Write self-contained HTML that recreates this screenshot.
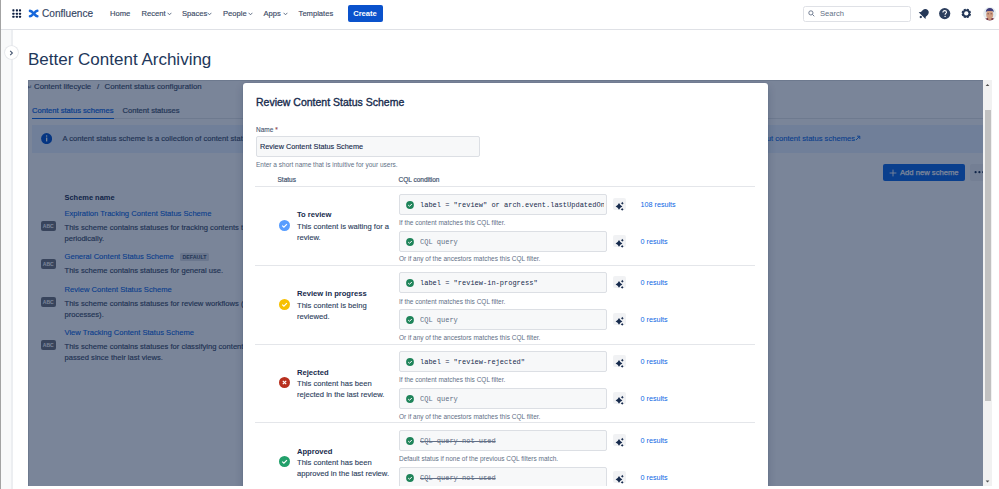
<!DOCTYPE html>
<html><head><meta charset="utf-8">
<style>
*{box-sizing:border-box;margin:0;padding:0}
html,body{width:999px;height:489px;overflow:hidden;background:#fff}
body{position:relative;font-family:"Liberation Sans",sans-serif;color:#172b4d}
.a{position:absolute;white-space:nowrap}
.nav{font-size:7.6px;color:#3b4a66;line-height:10px;top:9.3px;-webkit-text-stroke:.15px #3b4a66}
.chev{position:absolute;width:5px;height:5px}
.bc{font-size:7.8px;line-height:10px;color:#3b4a66;-webkit-text-stroke:.15px #3b4a66}
.tab{font-size:7.6px;line-height:10px;-webkit-text-stroke:.22px currentColor}
.txt{font-size:7.6px;line-height:10px;color:#3b4a66;-webkit-text-stroke:.15px #3b4a66}
.lnk{font-size:7.6px;line-height:10px;color:#0c66e4;-webkit-text-stroke:.12px #0c66e4}
.abc{width:14.5px;height:10px;background:#6f727a;border-radius:2px;color:#fff;font-size:5px;font-weight:700;line-height:10px;text-align:center}
.loz{width:29px;height:8px;background:#dcdfe4;border-radius:1.5px;color:#44546f;font-size:5.3px;font-weight:700;line-height:8px;text-align:center}
.sm{font-size:6.5px;line-height:10px}
.hl{color:#626f86}
.inp{width:208px;height:21px;background:#f7f8f9;border:1px solid #dcdfe4;border-radius:2px}
.mono{font-family:"Liberation Mono",monospace;font-size:7px;line-height:10px;overflow:hidden}
.aib{width:13px;height:12.3px;margin-top:-.5px;background:#f1f2f4;border-radius:2px}
</style></head><body>
<div class="a" style="left:0;top:0;width:1px;height:489px;background:#a3a3a3"></div>
<!-- header -->
<div class="a" style="left:1px;top:29px;width:998px;height:1px;background:#dfe1e6"></div>
<svg class="a" style="left:10px;top:6px" width="16" height="16" viewBox="0 0 16 16"><g fill="#0b1c3f"><rect x="2.35" y="3.35" width="2.1" height="2.1" rx=".6"/><rect x="5.85" y="3.35" width="2.1" height="2.1" rx=".6"/><rect x="8.95" y="3.35" width="2.1" height="2.1" rx=".6"/><rect x="2.35" y="6.65" width="2.1" height="2.1" rx=".6"/><rect x="5.85" y="6.65" width="2.1" height="2.1" rx=".6"/><rect x="8.95" y="6.65" width="2.1" height="2.1" rx=".6"/><rect x="2.35" y="9.75" width="2.1" height="2.1" rx=".6"/><rect x="5.85" y="9.75" width="2.1" height="2.1" rx=".6"/><rect x="8.95" y="9.75" width="2.1" height="2.1" rx=".6"/></g></svg>
<svg class="a" style="left:26px;top:6px" width="16" height="16" viewBox="0 0 16 16"><g fill="none" stroke="#1868db" stroke-width="2.6" stroke-linecap="round"><path d="M4 4.9 C6.6 4.9 8.8 10.1 11.3 10.2"/><path d="M4 10.3 C6.6 10.3 8.8 5 11.3 4.8"/></g></svg>
<div class="a" style="left:42px;top:6.3px;font-size:10.1px;line-height:15px;color:#344563;-webkit-text-stroke:.15px #344563">Confluence</div>
<div class="a nav" style="left:110px">Home</div>
<div class="a nav" style="left:141.5px">Recent</div>
<div class="a nav" style="left:182px">Spaces</div>
<div class="a nav" style="left:223px">People</div>
<div class="a nav" style="left:263.5px">Apps</div>
<div class="a nav" style="left:298.6px">Templates</div>
<svg class="a" style="left:166.5px;top:11.8px" width="5" height="4" viewBox="0 0 5 4"><path d="M0.6 0.8 L2.5 2.8 L4.4 0.8" fill="none" stroke="#44546f" stroke-width=".8"/></svg>
<svg class="a" style="left:207px;top:11.8px" width="5" height="4" viewBox="0 0 5 4"><path d="M0.6 0.8 L2.5 2.8 L4.4 0.8" fill="none" stroke="#44546f" stroke-width=".8"/></svg>
<svg class="a" style="left:248px;top:11.8px" width="5" height="4" viewBox="0 0 5 4"><path d="M0.6 0.8 L2.5 2.8 L4.4 0.8" fill="none" stroke="#44546f" stroke-width=".8"/></svg>
<svg class="a" style="left:283px;top:11.8px" width="5" height="4" viewBox="0 0 5 4"><path d="M0.6 0.8 L2.5 2.8 L4.4 0.8" fill="none" stroke="#44546f" stroke-width=".8"/></svg>
<div class="a" style="left:347.5px;top:5px;width:35px;height:17px;background:#0a52cc;border-radius:2px;color:#fff;font-weight:700;font-size:7.6px;line-height:17px;text-align:center">Create</div>
<!-- search -->
<div class="a" style="left:803px;top:5.5px;width:108px;height:16px;border:1px solid #dfe1e6;border-radius:2.5px;background:#fff"></div>
<svg class="a" style="left:808px;top:10px" width="7" height="7" viewBox="0 0 7 7"><circle cx="2.9" cy="2.9" r="2.1" fill="none" stroke="#626f86" stroke-width=".9"/><path d="M4.4 4.4 L6.3 6.3" stroke="#626f86" stroke-width=".9"/></svg>
<div class="a" style="left:820px;top:8.5px;font-size:7.6px;line-height:10px;color:#626f86">Search</div>
<!-- bell -->
<svg class="a" style="left:914px;top:4px" width="20" height="20" viewBox="0 0 20 20"><g transform="rotate(45 10.2 9.6)" fill="#253858"><path d="M10.2 4.6 C7.9 4.6 6.8 6.3 6.8 8.4 L6.8 10.8 L5.4 12.6 L15 12.6 L13.6 10.8 L13.6 8.4 C13.6 6.3 12.5 4.6 10.2 4.6Z"/><circle cx="10.2" cy="14.4" r="1.2"/></g></svg>
<!-- help -->
<svg class="a" style="left:939.2px;top:8.1px" width="12" height="12" viewBox="0 0 12 12"><circle cx="5.7" cy="5.6" r="5.6" fill="#2c3e5d"/><path d="M3.9 4.4 C3.9 3.2 4.7 2.6 5.7 2.6 C6.8 2.6 7.5 3.3 7.5 4.2 C7.5 5.4 6.1 5.5 6.1 6.7" fill="none" stroke="#fff" stroke-width="1.1"/><circle cx="6.1" cy="8.4" r=".7" fill="#fff"/></svg>
<!-- gear -->
<svg class="a" style="left:956px;top:4px" width="20" height="20" viewBox="0 0 20 20"><g fill="#253858"><circle cx="10.3" cy="9.4" r="3.9"/><rect x="9.20" y="4.70" width="2.2" height="2.2" rx=".3" transform="rotate(22.5 10.3 9.4)"/><rect x="9.20" y="4.70" width="2.2" height="2.2" rx=".3" transform="rotate(67.5 10.3 9.4)"/><rect x="9.20" y="4.70" width="2.2" height="2.2" rx=".3" transform="rotate(112.5 10.3 9.4)"/><rect x="9.20" y="4.70" width="2.2" height="2.2" rx=".3" transform="rotate(157.5 10.3 9.4)"/><rect x="9.20" y="4.70" width="2.2" height="2.2" rx=".3" transform="rotate(202.5 10.3 9.4)"/><rect x="9.20" y="4.70" width="2.2" height="2.2" rx=".3" transform="rotate(247.5 10.3 9.4)"/><rect x="9.20" y="4.70" width="2.2" height="2.2" rx=".3" transform="rotate(292.5 10.3 9.4)"/><rect x="9.20" y="4.70" width="2.2" height="2.2" rx=".3" transform="rotate(337.5 10.3 9.4)"/></g><circle cx="10.3" cy="9.4" r="2.15" fill="#fff"/></svg>
<!-- avatar -->
<svg class="a" style="left:982.5px;top:7px" width="14" height="14" viewBox="0 0 14 14"><defs><clipPath id="avc"><circle cx="6.8" cy="6.8" r="6.7"/></clipPath></defs><g clip-path="url(#avc)"><rect width="14" height="14" fill="#e6edf1"/><ellipse cx="6.8" cy="14.2" rx="6.2" ry="3.4" fill="#6e2b3c"/><rect x="5.2" y="9.5" width="3.2" height="3.5" fill="#c38c73"/><ellipse cx="6.7" cy="7.6" rx="3.5" ry="4.3" fill="#d09d83"/><path d="M2.8 5.6 C2.6 2.6 4.4 1 6.9 1 C9.4 1 11 2.6 10.7 5.6 C10 4.4 9.2 4 6.8 4.1 C4.4 4 3.5 4.4 2.8 5.6Z" fill="#3f3d7a"/><rect x="4.4" y="6.5" width="1.6" height=".7" fill="#5b3a3a"/><rect x="7.5" y="6.5" width="1.6" height=".7" fill="#5b3a3a"/></g></svg>
<!-- sidebar -->
<div class="a" style="left:1px;top:30px;width:10.5px;height:459px;background:#f8f9fa"></div>
<div class="a" style="left:11px;top:30px;width:1.5px;height:459px;background:#eceef1"></div>
<div class="a" style="left:4.8px;top:46px;width:13.4px;height:13.4px;border-radius:50%;background:#fff;box-shadow:0 0 0 .8px #e4e6ea"></div>
<svg class="a" style="left:9px;top:50px" width="5" height="6" viewBox="0 0 5 6"><path d="M1.2 0.8 L3.4 3 L1.2 5.2" fill="none" stroke="#44546f" stroke-width="1.1"/></svg>
<!-- title -->
<div class="a" style="left:28px;top:49px;font-size:17px;line-height:22px;color:#22375a">Better Content Archiving</div>

<!-- container -->
<div class="a" id="ct" style="left:28px;top:80px;width:964px;height:406px;overflow:hidden;background:#fff">
<div class="a" style="left:-28px;top:-80px;width:999px;height:489px">
<div class="a" style="left:28px;top:80px;width:956px;height:1px;background:#e2e4e8"></div>
<div class="a" style="left:28px;top:80px;width:1px;height:410px;background:#e2e4e8"></div>
<!-- breadcrumb -->
<div class="a bc" style="left:27px;top:81.5px;font-size:6px;opacity:.7">&#8629;</div>
<div class="a bc" style="left:34px;top:81.5px">Content lifecycle</div>
<div class="a bc" style="left:97px;top:81.5px">/</div>
<div class="a bc" style="left:104.5px;top:81.5px">Content status configuration</div>
<!-- tabs -->
<div class="a tab" style="left:32px;top:105.5px;color:#0c66e4">Content status schemes</div>
<div class="a tab" style="left:122.5px;top:105.5px;color:#44546f">Content statuses</div>
<div class="a" style="left:32px;top:118px;width:951px;height:1px;background:#e4e6ea"></div>
<div class="a" style="left:32px;top:117.5px;width:81.5px;height:1.6px;background:#0c66e4"></div>
<!-- banner -->
<div class="a" style="left:32px;top:124.5px;width:960px;height:28px;background:#e9f2ff"></div>
<svg class="a" style="left:41.2px;top:132.8px" width="11" height="11" viewBox="0 0 11 11"><circle cx="5.6" cy="5.6" r="5.5" fill="#0052cc"/><rect x="5" y="4.6" width="1.3" height="3.8" fill="#fff"/><circle cx="5.65" cy="3.1" r=".75" fill="#fff"/></svg>
<div class="a txt" style="left:62.5px;top:133.5px">A content status scheme is a collection of content statuses with the conditions under which each status is automatically applied.</div>
<div class="a txt" style="right:144px;top:133.5px;color:#0c66e4;-webkit-text-stroke:.12px #0c66e4">Learn more about content status schemes</div>
<svg class="a" style="left:855px;top:135px" width="6" height="6" viewBox="0 0 6 6"><path d="M1 5 L4.6 1.4 M2 1.2 H4.8 V4" fill="none" stroke="#0c66e4" stroke-width=".9"/></svg>
<!-- add button -->
<div class="a" style="left:883px;top:164px;width:82px;height:16.6px;background:#0c66e4;border-radius:2px"></div>
<svg class="a" style="left:889px;top:168.7px" width="8" height="8" viewBox="0 0 8 8"><path d="M4 0.6 V7.4 M0.6 4 H7.4" stroke="#fff" stroke-width=".9"/></svg>
<div class="a" style="left:900px;top:167.5px;font-size:7.65px;line-height:10px;color:#fff;-webkit-text-stroke:.25px #fff">Add new scheme</div>
<div class="a" style="left:970px;top:164px;width:20px;height:16.6px;background:#f1f2f4;border-radius:2px"></div>
<svg class="a" style="left:973px;top:170px" width="12" height="5" viewBox="0 0 12 5"><circle cx="2.6" cy="2.2" r="1.1" fill="#172b4d"/><circle cx="6.4" cy="2.2" r="1.1" fill="#172b4d"/><circle cx="10.2" cy="2.2" r="1.1" fill="#172b4d"/></svg>
<!-- table -->
<div class="a" style="left:64.5px;top:193.2px;font-size:7.45px;line-height:10px;font-weight:700;color:#172b4d">Scheme name</div>
<div class="a lnk" style="left:64.5px;top:209.0px">Expiration Tracking Content Status Scheme</div>
<div class="a txt" style="left:64.5px;top:222.8px">This scheme contains statuses for tracking contents that have not been updated periodically.</div>
<div class="a txt" style="left:64.5px;top:234.1px">periodically.</div>
<div class="a abc" style="left:41px;top:220.9px">ABC</div>
<div class="a lnk" style="left:64.5px;top:252.3px">General Content Status Scheme</div>
<div class="a txt" style="left:64.5px;top:266.1px">This scheme contains statuses for general use.</div>
<div class="a abc" style="left:41px;top:259.2px">ABC</div>
<div class="a loz" style="left:180px;top:253.4px">DEFAULT</div>
<div class="a lnk" style="left:64.5px;top:284.9px">Review Content Status Scheme</div>
<div class="a txt" style="left:64.5px;top:298.7px">This scheme contains statuses for review workflows (approval processes).</div>
<div class="a txt" style="left:64.5px;top:310.0px">processes).</div>
<div class="a abc" style="left:41px;top:296.7px">ABC</div>
<div class="a lnk" style="left:64.5px;top:328.3px">View Tracking Content Status Scheme</div>
<div class="a txt" style="left:64.5px;top:342.1px">This scheme contains statuses for classifying content by the time passed since their last views.</div>
<div class="a txt" style="left:64.5px;top:353.4px">passed since their last views.</div>
<div class="a abc" style="left:41px;top:340.0px">ABC</div>
<!-- blanket -->
<div class="a" style="left:28px;top:80px;width:955px;height:410px;background:rgba(9,30,66,0.54)"></div>
<!-- MODAL START -->
<div class="a" style="left:243px;top:83px;width:525px;height:420px;background:#fff;border-radius:3px;box-shadow:0 0 1px rgba(9,30,66,.31),0 4px 8px rgba(9,30,66,.2)"></div>
<div class="a" style="left:256px;top:95.2px;font-size:10.5px;line-height:14px;color:#172b4d;-webkit-text-stroke:.35px #172b4d">Review Content Status Scheme</div>
<div class="a sm" style="left:256px;top:124.5px;color:#44546f;-webkit-text-stroke:.1px #44546f">Name<span style="color:#c9372c"> *</span></div>
<div class="a" style="left:256px;top:135.5px;width:224px;height:21.2px;background:#f7f8f9;border:1px solid #dcdfe4;border-radius:2px"></div>
<div class="a" style="left:260px;top:141.8px;font-size:7.3px;line-height:10px;color:#172b4d;-webkit-text-stroke:.12px #172b4d">Review Content Status Scheme</div>
<div class="a sm hl" style="left:256px;top:159.5px">Enter a short name that is intuitive for your users.</div>
<div class="a sm" style="left:277.5px;top:174.5px;color:#44546f;-webkit-text-stroke:.2px #44546f">Status</div>
<div class="a sm" style="left:398.5px;top:174.5px;color:#44546f;-webkit-text-stroke:.2px #44546f">CQL condition</div>
<div class="a" style="left:255px;top:186.0px;width:500px;height:1px;background:#e4e6ea"></div>
<div class="a" style="left:255px;top:265.0px;width:500px;height:1px;background:#e4e6ea"></div>
<div class="a" style="left:255px;top:343.5px;width:500px;height:1px;background:#e4e6ea"></div>
<div class="a" style="left:255px;top:422.3px;width:500px;height:1px;background:#e4e6ea"></div>
<svg class="a" style="left:278.5px;top:219.9px" width="11" height="11" viewBox="0 0 11 11"><circle cx="5.5" cy="5.5" r="5.5" fill="#579dff"/><path d="M3.2 5.6 L4.9 7.2 L7.9 4.2" fill="none" stroke="#fff" stroke-width="1.2"/></svg>
<div class="a" style="left:297px;top:210.4px;font-size:7.6px;line-height:10px;font-weight:700;color:#172b4d">To review</div>
<div class="a" style="left:297px;top:221.8px;font-size:7.6px;line-height:10px;color:#2c3e5d;-webkit-text-stroke:.12px #2c3e5d">This content is waiting for a</div>
<div class="a" style="left:297px;top:232.8px;font-size:7.6px;line-height:10px;color:#2c3e5d;-webkit-text-stroke:.12px #2c3e5d">review.</div>
<div class="a inp" style="left:399px;top:194.0px"></div>
<svg class="a" style="left:406px;top:201.0px" width="8" height="8" viewBox="0 0 8 8"><circle cx="4" cy="4" r="3.9" fill="#1f845a"/><path d="M2.2 4.1 L3.5 5.3 L5.8 3" fill="none" stroke="#fff" stroke-width="1"/></svg>
<div class="a mono" style="left:420px;top:199.5px;color:#172b4d;width:184px;overflow:hidden">label = &quot;review&quot; or arch.event.lastUpdatedOn</div>
<div class="a aib" style="left:613px;top:198.5px"><svg width="13" height="12.5" viewBox="0 0 13 12.5"><path d="M6.0 3.0000000000000004 Q7.02 5.38 9.4 6.4 Q7.02 7.42 6.0 9.8 Q4.98 7.42 2.6 6.4 Q4.98 5.38 6.0 3.0000000000000004Z" fill="#172b4d"/><path d="M9.3 1.7999999999999998 Q9.75 2.85 10.8 3.3 Q9.75 3.75 9.3 4.8 Q8.85 3.75 7.800000000000001 3.3 Q8.85 2.85 9.3 1.7999999999999998Z" fill="#172b4d"/><path d="M9.2 8.0 Q9.62 8.98 10.6 9.4 Q9.62 9.82 9.2 10.8 Q8.78 9.82 7.799999999999999 9.4 Q8.78 8.98 9.2 8.0Z" fill="#172b4d"/></svg></div>
<div class="a" style="left:640.5px;top:200.3px;font-size:7.2px;line-height:10px;color:#0c66e4">108 results</div>
<div class="a sm hl" style="left:399px;top:217.7px">If the content matches this CQL filter.</div>
<div class="a inp" style="left:399px;top:231.0px"></div>
<svg class="a" style="left:406px;top:238.0px" width="8" height="8" viewBox="0 0 8 8"><circle cx="4" cy="4" r="3.9" fill="#1f845a"/><path d="M2.2 4.1 L3.5 5.3 L5.8 3" fill="none" stroke="#fff" stroke-width="1"/></svg>
<div class="a mono" style="left:420px;top:236.5px;color:#626f86">CQL query</div>
<div class="a aib" style="left:613px;top:235.5px"><svg width="13" height="12.5" viewBox="0 0 13 12.5"><path d="M6.0 3.0000000000000004 Q7.02 5.38 9.4 6.4 Q7.02 7.42 6.0 9.8 Q4.98 7.42 2.6 6.4 Q4.98 5.38 6.0 3.0000000000000004Z" fill="#172b4d"/><path d="M9.3 1.7999999999999998 Q9.75 2.85 10.8 3.3 Q9.75 3.75 9.3 4.8 Q8.85 3.75 7.800000000000001 3.3 Q8.85 2.85 9.3 1.7999999999999998Z" fill="#172b4d"/><path d="M9.2 8.0 Q9.62 8.98 10.6 9.4 Q9.62 9.82 9.2 10.8 Q8.78 9.82 7.799999999999999 9.4 Q8.78 8.98 9.2 8.0Z" fill="#172b4d"/></svg></div>
<div class="a" style="left:640.5px;top:237.3px;font-size:7.2px;line-height:10px;color:#0c66e4">0 results</div>
<div class="a sm hl" style="left:399px;top:254.4px">Or if any of the ancestors matches this CQL filter.</div>
<svg class="a" style="left:278.5px;top:298.8px" width="11" height="11" viewBox="0 0 11 11"><circle cx="5.5" cy="5.5" r="5.5" fill="#f7c000"/><path d="M3.2 5.6 L4.9 7.2 L7.9 4.2" fill="none" stroke="#fff" stroke-width="1.2"/></svg>
<div class="a" style="left:297px;top:289.3px;font-size:7.6px;line-height:10px;font-weight:700;color:#172b4d">Review in progress</div>
<div class="a" style="left:297px;top:300.7px;font-size:7.6px;line-height:10px;color:#2c3e5d;-webkit-text-stroke:.12px #2c3e5d">This content is being</div>
<div class="a" style="left:297px;top:311.7px;font-size:7.6px;line-height:10px;color:#2c3e5d;-webkit-text-stroke:.12px #2c3e5d">reviewed.</div>
<div class="a inp" style="left:399px;top:272.0px"></div>
<svg class="a" style="left:406px;top:279.0px" width="8" height="8" viewBox="0 0 8 8"><circle cx="4" cy="4" r="3.9" fill="#1f845a"/><path d="M2.2 4.1 L3.5 5.3 L5.8 3" fill="none" stroke="#fff" stroke-width="1"/></svg>
<div class="a mono" style="left:420px;top:277.5px;color:#172b4d;width:184px;overflow:hidden">label = &quot;review-in-progress&quot;</div>
<div class="a aib" style="left:613px;top:276.5px"><svg width="13" height="12.5" viewBox="0 0 13 12.5"><path d="M6.0 3.0000000000000004 Q7.02 5.38 9.4 6.4 Q7.02 7.42 6.0 9.8 Q4.98 7.42 2.6 6.4 Q4.98 5.38 6.0 3.0000000000000004Z" fill="#172b4d"/><path d="M9.3 1.7999999999999998 Q9.75 2.85 10.8 3.3 Q9.75 3.75 9.3 4.8 Q8.85 3.75 7.800000000000001 3.3 Q8.85 2.85 9.3 1.7999999999999998Z" fill="#172b4d"/><path d="M9.2 8.0 Q9.62 8.98 10.6 9.4 Q9.62 9.82 9.2 10.8 Q8.78 9.82 7.799999999999999 9.4 Q8.78 8.98 9.2 8.0Z" fill="#172b4d"/></svg></div>
<div class="a" style="left:640.5px;top:278.3px;font-size:7.2px;line-height:10px;color:#0c66e4">0 results</div>
<div class="a sm hl" style="left:399px;top:296.6px">If the content matches this CQL filter.</div>
<div class="a inp" style="left:399px;top:309.0px"></div>
<svg class="a" style="left:406px;top:316.0px" width="8" height="8" viewBox="0 0 8 8"><circle cx="4" cy="4" r="3.9" fill="#1f845a"/><path d="M2.2 4.1 L3.5 5.3 L5.8 3" fill="none" stroke="#fff" stroke-width="1"/></svg>
<div class="a mono" style="left:420px;top:314.5px;color:#626f86">CQL query</div>
<div class="a aib" style="left:613px;top:313.5px"><svg width="13" height="12.5" viewBox="0 0 13 12.5"><path d="M6.0 3.0000000000000004 Q7.02 5.38 9.4 6.4 Q7.02 7.42 6.0 9.8 Q4.98 7.42 2.6 6.4 Q4.98 5.38 6.0 3.0000000000000004Z" fill="#172b4d"/><path d="M9.3 1.7999999999999998 Q9.75 2.85 10.8 3.3 Q9.75 3.75 9.3 4.8 Q8.85 3.75 7.800000000000001 3.3 Q8.85 2.85 9.3 1.7999999999999998Z" fill="#172b4d"/><path d="M9.2 8.0 Q9.62 8.98 10.6 9.4 Q9.62 9.82 9.2 10.8 Q8.78 9.82 7.799999999999999 9.4 Q8.78 8.98 9.2 8.0Z" fill="#172b4d"/></svg></div>
<div class="a" style="left:640.5px;top:315.3px;font-size:7.2px;line-height:10px;color:#0c66e4">0 results</div>
<div class="a sm hl" style="left:399px;top:333.3px">Or if any of the ancestors matches this CQL filter.</div>
<svg class="a" style="left:278.5px;top:377.4px" width="11" height="11" viewBox="0 0 11 11"><circle cx="5.5" cy="5.5" r="5.5" fill="#b8301e"/><path d="M3.8 3.8 L7.2 7.2 M7.2 3.8 L3.8 7.2" fill="none" stroke="#fff" stroke-width="1.2"/></svg>
<div class="a" style="left:297px;top:367.9px;font-size:7.6px;line-height:10px;font-weight:700;color:#172b4d">Rejected</div>
<div class="a" style="left:297px;top:379.3px;font-size:7.6px;line-height:10px;color:#2c3e5d;-webkit-text-stroke:.12px #2c3e5d">This content has been</div>
<div class="a" style="left:297px;top:390.3px;font-size:7.6px;line-height:10px;color:#2c3e5d;-webkit-text-stroke:.12px #2c3e5d">rejected in the last review.</div>
<div class="a inp" style="left:399px;top:351.0px"></div>
<svg class="a" style="left:406px;top:358.0px" width="8" height="8" viewBox="0 0 8 8"><circle cx="4" cy="4" r="3.9" fill="#1f845a"/><path d="M2.2 4.1 L3.5 5.3 L5.8 3" fill="none" stroke="#fff" stroke-width="1"/></svg>
<div class="a mono" style="left:420px;top:356.5px;color:#172b4d;width:184px;overflow:hidden">label = &quot;review-rejected&quot;</div>
<div class="a aib" style="left:613px;top:355.5px"><svg width="13" height="12.5" viewBox="0 0 13 12.5"><path d="M6.0 3.0000000000000004 Q7.02 5.38 9.4 6.4 Q7.02 7.42 6.0 9.8 Q4.98 7.42 2.6 6.4 Q4.98 5.38 6.0 3.0000000000000004Z" fill="#172b4d"/><path d="M9.3 1.7999999999999998 Q9.75 2.85 10.8 3.3 Q9.75 3.75 9.3 4.8 Q8.85 3.75 7.800000000000001 3.3 Q8.85 2.85 9.3 1.7999999999999998Z" fill="#172b4d"/><path d="M9.2 8.0 Q9.62 8.98 10.6 9.4 Q9.62 9.82 9.2 10.8 Q8.78 9.82 7.799999999999999 9.4 Q8.78 8.98 9.2 8.0Z" fill="#172b4d"/></svg></div>
<div class="a" style="left:640.5px;top:357.3px;font-size:7.2px;line-height:10px;color:#0c66e4">0 results</div>
<div class="a sm hl" style="left:399px;top:375.2px">If the content matches this CQL filter.</div>
<div class="a inp" style="left:399px;top:388.0px"></div>
<svg class="a" style="left:406px;top:395.0px" width="8" height="8" viewBox="0 0 8 8"><circle cx="4" cy="4" r="3.9" fill="#1f845a"/><path d="M2.2 4.1 L3.5 5.3 L5.8 3" fill="none" stroke="#fff" stroke-width="1"/></svg>
<div class="a mono" style="left:420px;top:393.5px;color:#626f86">CQL query</div>
<div class="a aib" style="left:613px;top:392.5px"><svg width="13" height="12.5" viewBox="0 0 13 12.5"><path d="M6.0 3.0000000000000004 Q7.02 5.38 9.4 6.4 Q7.02 7.42 6.0 9.8 Q4.98 7.42 2.6 6.4 Q4.98 5.38 6.0 3.0000000000000004Z" fill="#172b4d"/><path d="M9.3 1.7999999999999998 Q9.75 2.85 10.8 3.3 Q9.75 3.75 9.3 4.8 Q8.85 3.75 7.800000000000001 3.3 Q8.85 2.85 9.3 1.7999999999999998Z" fill="#172b4d"/><path d="M9.2 8.0 Q9.62 8.98 10.6 9.4 Q9.62 9.82 9.2 10.8 Q8.78 9.82 7.799999999999999 9.4 Q8.78 8.98 9.2 8.0Z" fill="#172b4d"/></svg></div>
<div class="a" style="left:640.5px;top:394.3px;font-size:7.2px;line-height:10px;color:#0c66e4">0 results</div>
<div class="a sm hl" style="left:399px;top:411.9px">Or if any of the ancestors matches this CQL filter.</div>
<svg class="a" style="left:278.5px;top:456.2px" width="11" height="11" viewBox="0 0 11 11"><circle cx="5.5" cy="5.5" r="5.5" fill="#22a06b"/><path d="M3.2 5.6 L4.9 7.2 L7.9 4.2" fill="none" stroke="#fff" stroke-width="1.2"/></svg>
<div class="a" style="left:297px;top:446.7px;font-size:7.6px;line-height:10px;font-weight:700;color:#172b4d">Approved</div>
<div class="a" style="left:297px;top:458.1px;font-size:7.6px;line-height:10px;color:#2c3e5d;-webkit-text-stroke:.12px #2c3e5d">This content has been</div>
<div class="a" style="left:297px;top:469.1px;font-size:7.6px;line-height:10px;color:#2c3e5d;-webkit-text-stroke:.12px #2c3e5d">approved in the last review.</div>
<div class="a inp" style="left:399px;top:430.0px"></div>
<svg class="a" style="left:406px;top:437.0px" width="8" height="8" viewBox="0 0 8 8"><circle cx="4" cy="4" r="3.9" fill="#1f845a"/><path d="M2.2 4.1 L3.5 5.3 L5.8 3" fill="none" stroke="#fff" stroke-width="1"/></svg>
<div class="a mono" style="left:420px;top:435.5px;color:#626f86;text-decoration:line-through">CQL query not used</div>
<div class="a aib" style="left:613px;top:434.5px"><svg width="13" height="12.5" viewBox="0 0 13 12.5"><path d="M6.0 3.0000000000000004 Q7.02 5.38 9.4 6.4 Q7.02 7.42 6.0 9.8 Q4.98 7.42 2.6 6.4 Q4.98 5.38 6.0 3.0000000000000004Z" fill="#172b4d"/><path d="M9.3 1.7999999999999998 Q9.75 2.85 10.8 3.3 Q9.75 3.75 9.3 4.8 Q8.85 3.75 7.800000000000001 3.3 Q8.85 2.85 9.3 1.7999999999999998Z" fill="#172b4d"/><path d="M9.2 8.0 Q9.62 8.98 10.6 9.4 Q9.62 9.82 9.2 10.8 Q8.78 9.82 7.799999999999999 9.4 Q8.78 8.98 9.2 8.0Z" fill="#172b4d"/></svg></div>
<div class="a" style="left:640.5px;top:436.3px;font-size:7.2px;line-height:10px;color:#0c66e4">0 results</div>
<div class="a sm hl" style="left:399px;top:454.0px">Default status if none of the previous CQL filters match.</div>
<div class="a inp" style="left:399px;top:467.0px"></div>
<svg class="a" style="left:406px;top:474.0px" width="8" height="8" viewBox="0 0 8 8"><circle cx="4" cy="4" r="3.9" fill="#1f845a"/><path d="M2.2 4.1 L3.5 5.3 L5.8 3" fill="none" stroke="#fff" stroke-width="1"/></svg>
<div class="a mono" style="left:420px;top:472.5px;color:#626f86;text-decoration:line-through">CQL query not used</div>
<div class="a aib" style="left:613px;top:471.5px"><svg width="13" height="12.5" viewBox="0 0 13 12.5"><path d="M6.0 3.0000000000000004 Q7.02 5.38 9.4 6.4 Q7.02 7.42 6.0 9.8 Q4.98 7.42 2.6 6.4 Q4.98 5.38 6.0 3.0000000000000004Z" fill="#172b4d"/><path d="M9.3 1.7999999999999998 Q9.75 2.85 10.8 3.3 Q9.75 3.75 9.3 4.8 Q8.85 3.75 7.800000000000001 3.3 Q8.85 2.85 9.3 1.7999999999999998Z" fill="#172b4d"/><path d="M9.2 8.0 Q9.62 8.98 10.6 9.4 Q9.62 9.82 9.2 10.8 Q8.78 9.82 7.799999999999999 9.4 Q8.78 8.98 9.2 8.0Z" fill="#172b4d"/></svg></div>
<div class="a" style="left:640.5px;top:473.3px;font-size:7.2px;line-height:10px;color:#0c66e4">0 results</div>
<div class="a sm hl" style="left:399px;top:490.7px">Or if any of the ancestors matches this CQL filter.</div>
<!-- MODAL END -->
<!-- scrollbar -->
<div class="a" style="left:983px;top:80px;width:9px;height:406px;background:#f1f1f1"></div>
<div class="a" style="left:984.5px;top:110px;width:6.5px;height:291px;background:#c1c1c1"></div>
<svg class="a" style="left:984px;top:82px" width="7" height="5" viewBox="0 0 7 5"><path d="M1.6 4 L3.5 1.9 L5.4 4Z" fill="#505050"/></svg>
<svg class="a" style="left:984px;top:478.5px" width="7" height="5" viewBox="0 0 7 5"><path d="M1.6 1.4 L3.5 3.5 L5.4 1.4Z" fill="#505050"/></svg>
</div>
</div>
</body></html>
